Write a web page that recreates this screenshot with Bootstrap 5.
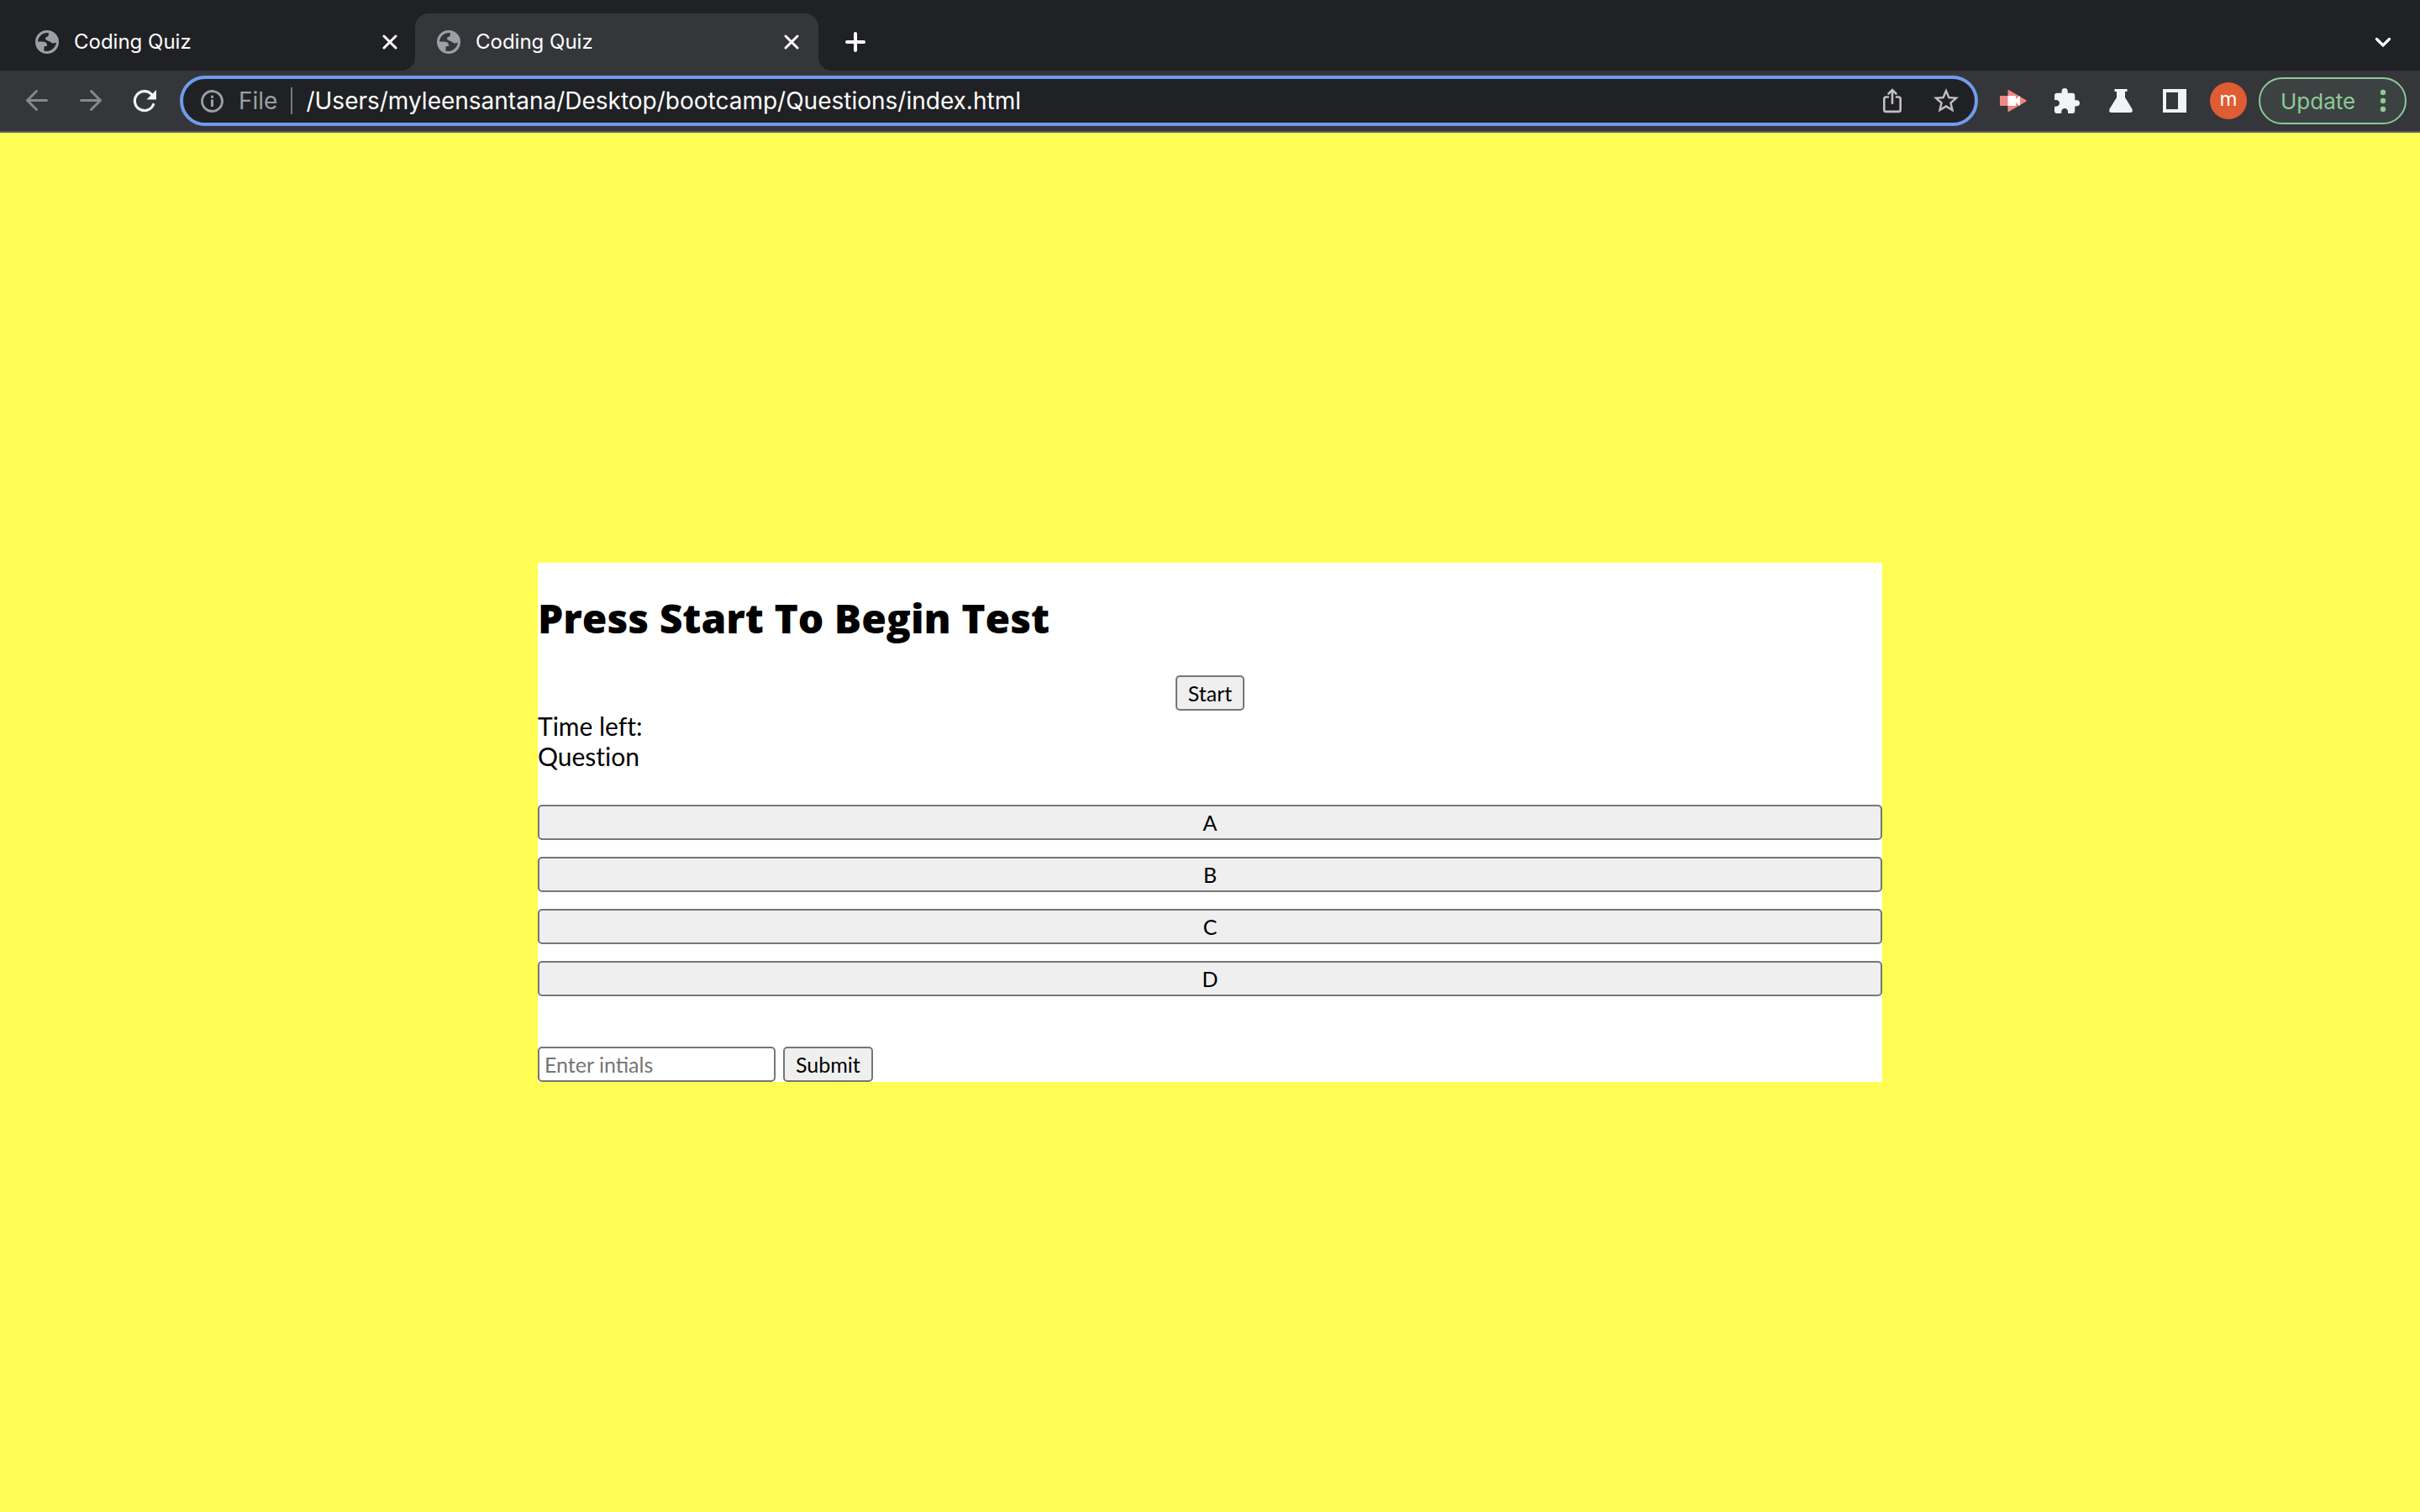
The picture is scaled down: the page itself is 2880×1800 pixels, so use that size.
<!DOCTYPE html>
<html lang="en">
<head>
<meta charset="utf-8">
<meta name="viewport" content="width=device-width, initial-scale=1">
<title>Coding Quiz</title>
<link rel="stylesheet" href="https://cdn.jsdelivr.net/npm/bootstrap@5.3.0/dist/css/bootstrap.min.css">
<style>
  body { font-family: Lato, sans-serif; color: #000; background: #fffd54; }
  .chrome-ui { font-family: Inter, sans-serif; color: #fff; }
  .icon-btn { display: flex; align-items: center; justify-content: center; padding: 0; border: 0; background: none; color: inherit; }

  .tab-strip { height: 84px; padding: 16px 20px 0 16px; background: #202124; }
  .page-tab { position: relative; width: 480px; padding: 0 16px 0 26px; gap: 18px; font-size: 24px; color: #fff; }
  .page-tab a { color: inherit; }
  .page-tab.current { margin-left: -2px; background: #35363a; border-radius: 16px 16px 0 0; }
  .page-tab.current::before, .page-tab.current::after { content: ""; position: absolute; bottom: 0; width: 16px; height: 16px; }
  .page-tab.current::before { right: 100%; background: radial-gradient(circle at 0 0, transparent 16px, #35363a 16px); }
  .page-tab.current::after { left: 100%; background: radial-gradient(circle at 100% 0, transparent 16px, #35363a 16px); }
  .tab-close { width: 32px; height: 32px; }
  .strip-btn { width: 48px; height: 48px; }
  .strip-btn.new-tab { margin-left: 20px; }

  .tool-row { height: 74px; padding: 0 16px 0 12px; background: #35363a; border-bottom: 2px solid #5f6063; }
  .tool-btn { width: 64px; height: 56px; color: #f1f3f4; }
  .tool-btn:disabled { color: #87888a; }
  .address { height: 60px; margin: 0 10px; padding: 0 2px 0 20px; border: 4px solid #6f9cee; border-radius: 30px; background: #202124; color: #9aa0a6; font-size: 28px; }
  .address label { padding: 0 16px 0 18px; }
  .address .rule { width: 2px; height: 32px; background: #76787b; }
  .address input { min-width: 0; padding: 0 0 0 16px; border: 0; outline: 0; background: none; color: #fff; }
  .address .tool-btn { color: #c0c0c0; }
  .avatar { width: 44px; height: 44px; border-radius: 50%; background: #e05c33; color: #fff; font-size: 24px; line-height: 40px; }
  .update { width: 176px; height: 56px; margin-left: 4px; padding: 0 22px 0 24px; border: 2px solid #8fc998; border-radius: 28px; background: #3c4241; color: #8fc998; font-size: 26px; }

  .quiz { width: 100%; max-width: 1600px; padding-top: 38px; background: #fff; font-size: 30px; line-height: 36px; font-variant-ligatures: none; }
  .quiz h1 { margin: 0 0 40px; font-family: "Open Sans", sans-serif; font-size: 48px; font-weight: 800; line-height: 56px; }
  .quiz button, .quiz input { height: 42px; border: 2px solid #767676; border-radius: 5px; color: #000; font-size: 25px; line-height: 36px; }
  .quiz button { padding: 0 13px; background: #efefef; }
  .quiz input { width: 283px; padding: 0 6px; background: #fff; }
  .quiz input::placeholder { color: #757575; opacity: 1; }
  .answers { gap: 20px; margin: 40px 0 60px; }
  .entry { gap: 9px; }
</style>
</head>
<body class="d-flex flex-column min-vh-100">
<svg width="0" height="0" class="position-absolute" aria-hidden="true">
  <symbol id="globe" viewBox="0 0 28 28">
    <path fill="#9aa0a6" fill-rule="evenodd" d="M14 0a14 14 0 1 1 0 28a14 14 0 0 1 0-28zM15.500 3C9 2.500 3.500 7 3 13.500C6 13.500 10 13 12.500 14.500C14 15.500 14 17.500 14 19L10.800 19C10.200 21 10.600 23.300 10.200 24.500C17 26.500 24 22 25 14.500C22.500 15.800 20 16 18.500 14.200C17.500 12.800 15 13.200 12.500 11.200C11.500 10 12 8 14 7.800C15.500 7.600 16.500 5 15.500 3z"/>
  </symbol>
  <symbol id="cross" viewBox="0 0 18 18">
    <path d="M2 2l14 14M16 2L2 16" stroke="currentColor" stroke-width="3" stroke-linecap="round"/>
  </symbol>
</svg>

<header class="chrome-ui">
  <nav class="tab-strip d-flex" aria-label="Tabs">
    <div class="page-tab d-flex align-items-center">
      <svg width="28" height="28" aria-hidden="true"><use href="#globe"/></svg>
      <a href="#" class="flex-grow-1 text-decoration-none">Coding Quiz</a>
      <button type="button" class="icon-btn tab-close" aria-label="Close tab"><svg width="18" height="18"><use href="#cross"/></svg></button>
    </div>
    <div class="page-tab current d-flex align-items-center">
      <svg width="28" height="28" aria-hidden="true"><use href="#globe"/></svg>
      <a href="#" class="flex-grow-1 text-decoration-none">Coding Quiz</a>
      <button type="button" class="icon-btn tab-close" aria-label="Close tab"><svg width="18" height="18"><use href="#cross"/></svg></button>
    </div>
    <button type="button" class="icon-btn strip-btn new-tab align-self-center" aria-label="New tab">
      <svg width="24" height="24" viewBox="0 0 24 24"><path d="M12 2v20M2 12h20" stroke="currentColor" stroke-width="4" stroke-linecap="round"/></svg>
    </button>
    <button type="button" class="icon-btn strip-btn ms-auto align-self-center" aria-label="Search tabs">
      <svg width="20" height="12" viewBox="0 0 20 12" fill="none"><path d="M2.500 2.500L10 10l7.500-7.500" stroke="currentColor" stroke-width="3.200" stroke-linecap="round"/></svg>
    </button>
  </nav>

  <div class="tool-row d-flex align-items-center">
    <button type="button" class="icon-btn tool-btn" aria-label="Back" disabled>
      <svg width="28" height="28" viewBox="0 0 28 28" fill="none" stroke="currentColor" stroke-width="3" stroke-linecap="round" stroke-linejoin="round"><path d="M25.500 13.500H2.500M13.500 2.500l-11 11 11 11"/></svg>
    </button>
    <button type="button" class="icon-btn tool-btn" aria-label="Forward" disabled>
      <svg width="28" height="28" viewBox="0 0 28 28" fill="none" stroke="currentColor" stroke-width="3" stroke-linecap="round" stroke-linejoin="round"><path d="M2.500 13.500h23M14.500 2.500l11 11-11 11"/></svg>
    </button>
    <button type="button" class="icon-btn tool-btn" aria-label="Reload">
      <svg width="28" height="28" viewBox="0 0 28 28" fill="none"><path d="M24.500 18.500A11.500 11.500 0 1 1 22.500 6.500" stroke="currentColor" stroke-width="3.200" stroke-linecap="round"/><path d="M28 1v11.500H16.500z" fill="currentColor"/></svg>
    </button>

    <div class="address d-flex align-items-center flex-grow-1">
      <svg width="28" height="28" viewBox="0 0 28 28" fill="none" aria-hidden="true"><circle cx="14.500" cy="14.500" r="12" stroke="currentColor" stroke-width="2.800"/><path d="M13 12.500h3V21h-3zM13 7.800h3v3h-3z" fill="currentColor"/></svg>
      <label for="url">File</label>
      <span class="rule"></span>
      <input id="url" class="flex-grow-1" type="text" value="/Users/myleensantana/Desktop/bootcamp/Questions/index.html">
      <button type="button" class="icon-btn tool-btn" aria-label="Share">
        <svg width="24" height="30" viewBox="0 0 24 30" fill="none" stroke="currentColor" stroke-width="2.600" stroke-linecap="round"><path d="M7 10.500H4.500a2.200 2.200 0 0 0-2.200 2.200v13a2.200 2.200 0 0 0 2.200 2.200h15a2.200 2.200 0 0 0 2.200-2.200v-13a2.200 2.200 0 0 0-2.200-2.200H17M12 18V2.500M7.500 6.500L12 2l4.500 4.500"/></svg>
      </button>
      <button type="button" class="icon-btn tool-btn" aria-label="Bookmark">
        <svg width="30" height="30" viewBox="2 2 20 20" fill="currentColor"><path d="M22 9.240l-7.190-.62L12 2 9.190 8.630 2 9.240l5.460 4.730L5.820 21 12 17.270 18.180 21l-1.630-7.030L22 9.240zM12 15.400l-3.760 2.270 1-4.280-3.320-2.880 4.380-.38L12 6.100l1.710 4.040 4.380.38-3.320 2.880 1 4.280L12 15.400z"/></svg>
      </button>
    </div>

    <button type="button" class="icon-btn tool-btn" aria-label="Screen recorder">
      <svg width="32" height="28" viewBox="0 0 32 28"><path d="M0 9a1 1 0 0 1 1-1h9v12H1a1 1 0 0 1-1-1zM9.500 2Q9.500 .500 11 1.300L31 13q1.200 1 0 2L11 26.700q-1.500 .800-1.500-.700z" fill="#f08781"/><path d="M9.500 8h8.500a1 1 0 0 1 1 1v3l4-3.500h1v11h-1L19 16v3a1 1 0 0 1-1 1H9.500z" fill="#fff"/></svg>
    </button>
    <button type="button" class="icon-btn tool-btn" aria-label="Extensions">
      <svg width="30" height="30" viewBox="2 1 21 21" fill="currentColor"><path d="M20.500 11H19V7c0-1.100-.9-2-2-2h-4V3.500a2.500 2.500 0 0 0-5 0V5H4c-1.100 0-1.990.9-1.990 2v3.800H3.500c1.490 0 2.700 1.210 2.700 2.700s-1.210 2.700-2.700 2.700H2V20c0 1.100.9 2 2 2h3.800v-1.500c0-1.490 1.210-2.700 2.700-2.700s2.700 1.210 2.700 2.700V22H17c1.100 0 2-.9 2-2v-4h1.500a2.500 2.500 0 0 0 0-5z"/></svg>
    </button>
    <button type="button" class="icon-btn tool-btn" aria-label="Labs">
      <svg width="28" height="28" viewBox="0 0 28 28" fill="currentColor"><path d="M6.500 0h15v3H19v7l8.300 13.500q1.800 4.500-2.300 4.500H3Q-1.100 28 .700 23.500L9 10V3H6.500z"/></svg>
    </button>
    <button type="button" class="icon-btn tool-btn" aria-label="Side panel">
      <svg width="28" height="28" viewBox="0 0 28 28" fill="currentColor"><path fill-rule="evenodd" d="M0 0h28v28H0zM4 4v20h14V4z"/></svg>
    </button>
    <button type="button" class="icon-btn tool-btn" aria-label="Profile"><span class="avatar">m</span></button>
    <button type="button" class="update d-flex align-items-center justify-content-between">
      Update
      <svg width="8" height="28" viewBox="0 0 8 28" fill="currentColor" aria-hidden="true"><circle cx="4" cy="4" r="3.200"/><circle cx="4" cy="14" r="3.200"/><circle cx="4" cy="24" r="3.200"/></svg>
    </button>
  </div>
</header>

<main class="d-flex flex-grow-1 align-items-center justify-content-center">
  <section class="quiz">
    <h1>Press Start To Begin Test</h1>
    <div class="d-flex justify-content-center"><button type="button">Start</button></div>
    <div>Time left:</div>
    <div>Question</div>
    <div class="answers d-grid">
      <button type="button">A</button>
      <button type="button">B</button>
      <button type="button">C</button>
      <button type="button">D</button>
    </div>
    <form class="entry d-flex">
      <input type="text" aria-label="Initials" placeholder="Enter intials">
      <button type="button">Submit</button>
    </form>
  </section>
</main>
<script src="https://cdn.jsdelivr.net/npm/bootstrap@5.3.0/dist/js/bootstrap.bundle.min.js"></script>
</body>
</html>
